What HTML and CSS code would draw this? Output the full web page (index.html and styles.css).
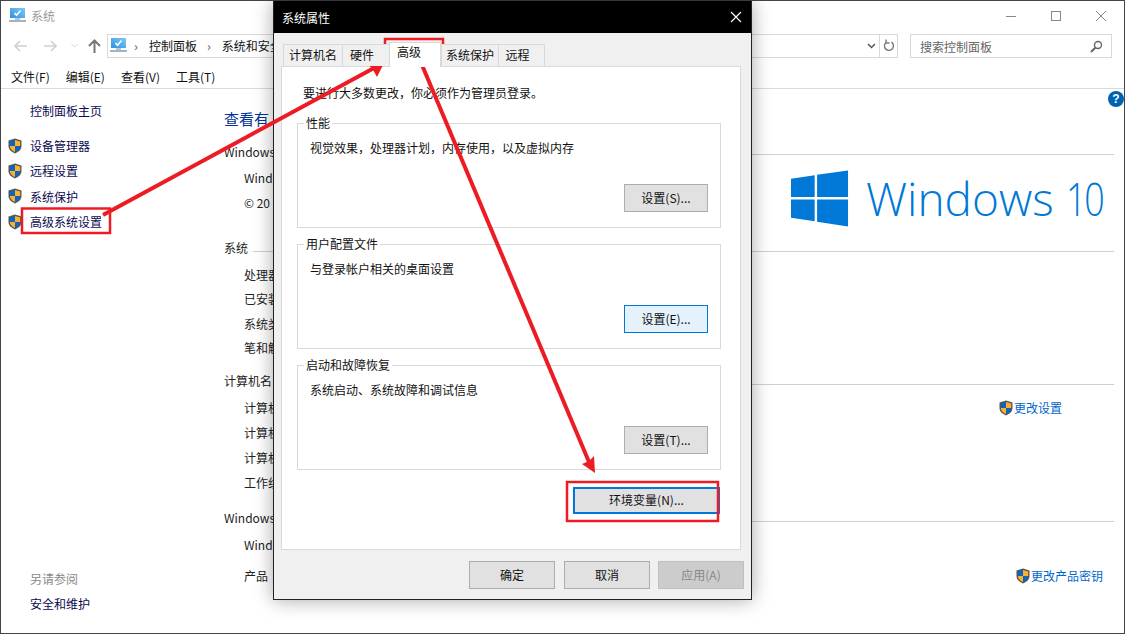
FILE: index.html
```html
<!DOCTYPE html>
<html>
  <head>
    <meta charset="UTF-8" />
    <title>系统</title>
    <link rel="stylesheet" href="styles.css">
  </head>
  <body>
    <svg class="defs" width="0" height="0">
      <defs>
        <linearGradient id="screen" x1="0" y1="1" x2="1" y2="0">
          <stop offset="0" stop-color="#2f8fe0"/>
          <stop offset="1" stop-color="#7fcaf7"/>
        </linearGradient>
      </defs>
      <symbol id="shield" viewBox="0 0 16 16">
        <path d="M8 .5 14.500 2.600V8c0 3.400-2.700 5.800-6.500 7.500C4.200 13.800 1.500 11.400 1.500 8V2.600Z" fill="#555"/>
        <path d="M8 2 2.800 3.600V8H8Z" fill="#0a66c2"/>
        <path d="M8 2 13.200 3.600V8H8Z" fill="#fbb12c"/>
        <path d="M2.800 8C3 10.800 5 12.700 8 14.100V8Z" fill="#fbb12c"/>
        <path d="M13.200 8C13 10.800 11 12.700 8 14.100V8Z" fill="#0a66c2"/>
      </symbol>
      <symbol id="monitor" viewBox="0 0 17 17">
        <rect x="1" y="1" width="15" height="10" fill="url(#screen)"/>
        <path d="M5.500 6 7.500 8.200 11.500 3.500" fill="none" stroke="#fff" stroke-width="1.600"/>
        <rect x="6" y="11" width="5" height="2" fill="#b5c6d4"/>
        <rect x="0" y="13" width="17" height="2" fill="#9fb4c6"/>
      </symbol>
    </svg>

    <div class="win">
      <div class="titlebar">
        <svg class="title-icon"><use href="#monitor"/></svg>
        <span class="title-text">系统</span>
        <div class="win-btns">
          <svg width="12" height="12" viewBox="0 0 12 12"><path d="M1 6.500H11" stroke="#888"/></svg>
          <svg width="12" height="12" viewBox="0 0 12 12"><rect x="1.500" y="1.500" width="9" height="9" fill="none" stroke="#888"/></svg>
          <svg width="12" height="12" viewBox="0 0 12 12"><path d="M1 1 11 11M11 1 1 11" stroke="#888"/></svg>
        </div>
      </div>

      <div class="navbar">
        <svg class="nav-arrow" width="13" height="12" viewBox="0 0 13 12"><path d="M6 1 1 6 6 11M1 6H13" fill="none" stroke="#d0d0d0" stroke-width="1.600"/></svg>
        <svg class="nav-arrow" width="13" height="12" viewBox="0 0 13 12"><path d="M7 1 12 6 7 11M12 6H0" fill="none" stroke="#d0d0d0" stroke-width="1.600"/></svg>
        <svg class="nav-drop" width="7" height="5" viewBox="0 0 7 5"><path d="M.5 1 3.500 4 6.500 1" fill="none" stroke="#d0d0d0"/></svg>
        <svg class="nav-up" width="13" height="14" viewBox="0 0 13 14"><path d="M1 7 6.500 1.500 12 7M6.500 2V14" fill="none" stroke="#777" stroke-width="2"/></svg>
        <div class="address">
          <svg class="addr-icon"><use href="#monitor"/></svg>
          <span class="crumb-sep">›</span>
          <span class="crumb">控制面板</span>
          <span class="crumb-sep">›</span>
          <span class="crumb">系统和安全</span>
          <svg class="addr-drop" width="9" height="6" viewBox="0 0 9 6"><path d="M1 1 4.500 4.500 8 1" fill="none" stroke="#555" stroke-width="1.500"/></svg>
          <div class="addr-refresh">
            <svg width="12" height="13" viewBox="0 0 12 13"><path d="M8.500 3.200A4.500 4.500 0 1 1 3 3.500M3 .5V4H6.500" fill="none" stroke="#777" stroke-width="1.400"/></svg>
          </div>
        </div>
        <div class="search">
          <span>搜索控制面板</span>
          <svg width="13" height="13" viewBox="0 0 13 13"><circle cx="8" cy="5" r="3.500" fill="none" stroke="#666" stroke-width="1.400"/><path d="M5.500 7.500 1 12" stroke="#666" stroke-width="2"/></svg>
        </div>
      </div>

      <div class="menubar">
        <span>文件(F)</span>
        <span>编辑(E)</span>
        <span>查看(V)</span>
        <span>工具(T)</span>
      </div>

      <div class="content">
        <div class="sidebar">
          <div class="side-home">控制面板主页</div>
          <div class="side-item"><svg class="shield"><use href="#shield"/></svg>设备管理器</div>
          <div class="side-item"><svg class="shield"><use href="#shield"/></svg>远程设置</div>
          <div class="side-item"><svg class="shield"><use href="#shield"/></svg>系统保护</div>
          <div class="side-item"><svg class="shield"><use href="#shield"/></svg>高级系统设置</div>
          <div class="side-foot">
            <div class="side-see">另请参阅</div>
            <div class="side-link">安全和维护</div>
          </div>
        </div>

        <div class="main">
          <div class="help">?</div>
          <h1>查看有</h1>

          <div class="sec-head sec-first"><span>Windows</span></div>
          <div class="row">Wind</div>
          <div class="row">© 20</div>
          <div class="logo">
            <svg width="58" height="57" viewBox="0 0 60 58"><path d="M0 8.500 24.500 5V27.500H0ZM27 4.500 59 0V27.500H27ZM0 30H24.500V52.500L0 49ZM27 30H59V58L27 53Z" fill="#0078d7"/></svg>
            <span>Windows <span class="logo-num">10</span></span>
          </div>

          <div class="sec-head sec-system"><span>系统</span></div>
          <div class="row row-tight">处理器</div>
          <div class="row row-tight">已安装</div>
          <div class="row row-tight">系统类</div>
          <div class="row row-tight">笔和触</div>

          <div class="sec-head sec-name"><span>计算机名</span></div>
          <div class="row">计算机<a class="change change-a"><svg class="shield"><use href="#shield"/></svg>更改设置</a></div>
          <div class="row">计算机</div>
          <div class="row">计算机</div>
          <div class="row">工作组</div>

          <div class="sec-head sec-activate"><span>Windows</span></div>
          <div class="row">Wind</div>
          <div class="row row-product">产品<a class="change change-b"><svg class="shield"><use href="#shield"/></svg>更改产品密钥</a></div>
        </div>
      </div>
    </div>

    <div class="dialog">
      <div class="dlg-title">
        <span>系统属性</span>
        <svg width="12" height="12" viewBox="0 0 12 12"><path d="M1 1 11 11M11 1 1 11" stroke="#fff" stroke-width="1.200"/></svg>
      </div>
      <div class="dlg-body">
        <div class="tabs">
          <div class="tab tab-name">计算机名</div>
          <div class="tab tab-hw">硬件</div>
          <div class="tab tab-on">高级</div>
          <div class="tab tab-prot">系统保护</div>
          <div class="tab tab-rem">远程</div>
        </div>
        <div class="panel">
          <p class="notice">要进行大多数更改，你必须作为管理员登录。</p>
          <fieldset class="group">
            <legend>性能</legend>
            <p>视觉效果，处理器计划，内存使用，以及虚拟内存</p>
            <button class="btn">设置(S)...</button>
          </fieldset>
          <fieldset class="group">
            <legend>用户配置文件</legend>
            <p>与登录帐户相关的桌面设置</p>
            <button class="btn btn-hover">设置(E)...</button>
          </fieldset>
          <fieldset class="group">
            <legend>启动和故障恢复</legend>
            <p>系统启动、系统故障和调试信息</p>
            <button class="btn">设置(T)...</button>
          </fieldset>
          <button class="btn btn-env">环境变量(N)...</button>
        </div>
        <div class="dlg-foot">
          <button class="btn btn-ok">确定</button>
          <button class="btn">取消</button>
          <button class="btn btn-off">应用(A)</button>
        </div>
      </div>
    </div>

    <!-- 红色标注 -->
    <svg class="arrows" width="1125" height="634" viewBox="0 0 1125 634">
      <g fill="none" stroke="#ed1c24" stroke-width="2.500">
        <rect x="22" y="208.500" width="88" height="24.500"/>
        <rect x="385" y="39" width="58" height="24.500"/>
        <rect x="567" y="482" width="151" height="39"/>
      </g>
      <path d="M103 215 374 68" stroke="#ed1c24" stroke-width="4"/>
      <path d="M385 61 365 63 372 68 377 77Z" fill="#ed1c24"/>
      <path d="M422 65 589 462" stroke="#ed1c24" stroke-width="4"/>
      <path d="M595 473 582 464 589 461 594 456Z" fill="#ed1c24"/>
    </svg>
  </body>
</html>
```

FILE: styles.css
```css
/* 基本 */
html, body {
  margin: 0;
  padding: 0;
  width: 1125px;
  height: 634px;
  overflow: hidden;
  background: #fff;
  font-family: "Noto Sans CJK SC", "Noto Sans", sans-serif;
  font-size: 12px;
  color: #111;
}

.defs {
  display: block;
  height: 0;
}

/* 后面的系统窗口 */
.win {
  width: 1125px;
  height: 634px;
  box-sizing: border-box;
  border: 1px solid #44444c;
  display: flex;
  flex-direction: column;
}

.titlebar {
  height: 29px;
  flex-shrink: 0;
  display: flex;
  align-items: center;
  padding-left: 8px;
}

.title-icon {
  width: 17px;
  height: 17px;
  margin-right: 5px;
}

.title-text {
  color: #999;
}

.win-btns {
  margin-left: auto;
  display: flex;
  gap: 33px;
  margin-right: 17px;
}

.navbar {
  height: 31px;
  flex-shrink: 0;
  display: flex;
  align-items: center;
  padding-left: 13px;
  box-sizing: border-box;
}

.nav-arrow {
  margin-right: 17px;
}

.nav-drop {
  margin: 0 10px 0 -3px;
}

.nav-up {
  margin-right: 6px;
}

.address {
  width: 791px;
  height: 24px;
  box-sizing: border-box;
  border: 1px solid #d9d9d9;
  display: flex;
  align-items: center;
  padding-left: 2px;
}

.addr-icon {
  width: 17px;
  height: 17px;
  margin-right: -3px;
}

.crumb-sep {
  color: #777;
  margin: 0 11px 0 10px;
  font-weight: bold;
}

.addr-drop {
  margin-left: auto;
  margin-right: 3px;
}

.addr-refresh {
  width: 17px;
  height: 22px;
  border-left: 1px solid #d9d9d9;
  display: flex;
  align-items: center;
  justify-content: center;
}

.search {
  width: 202px;
  height: 24px;
  box-sizing: border-box;
  border: 1px solid #d9d9d9;
  margin-left: 12px;
  display: flex;
  align-items: center;
  justify-content: space-between;
  padding: 1px 8px 0 9px;
  color: #666;
}

.menubar {
  height: 28px;
  flex-shrink: 0;
  box-sizing: border-box;
  border-bottom: 1px solid #dadada;
  display: flex;
  align-items: center;
  padding-left: 10px;
  padding-top: 4px;
  gap: 16px;
}

.content {
  flex: 1;
  display: flex;
  min-height: 0;
}

/* 左侧 */
.sidebar {
  width: 223px;
  flex-shrink: 0;
  display: flex;
  flex-direction: column;
  color: #0a0a50;
}

.side-home {
  margin: 13px 0 13px 29px;
  line-height: 18px;
}

.side-item {
  height: 25.300px;
  display: flex;
  align-items: center;
  padding-left: 6px;
}

.shield {
  width: 16px;
  height: 16px;
  flex-shrink: 0;
}

.side-item .shield {
  margin-right: 7px;
}

.side-foot {
  margin-top: auto;
  padding: 0 0 20px 29px;
}

.side-see {
  color: #888;
  margin-bottom: 7px;
  line-height: 18px;
}

.side-link {
  line-height: 18px;
}

/* 右侧内容 */
.main {
  flex: 1;
  padding-right: 10px;
  position: relative;
  color: #222;
}

.main h1 {
  margin: 19px 0 0 0;
  font-size: 15px;
  font-weight: normal;
  line-height: 22px;
  color: #003399;
}

.help {
  position: absolute;
  right: 0;
  top: 2px;
  width: 16px;
  height: 16px;
  border-radius: 50%;
  background: #0063b1;
  color: #fff;
  font: bold 12px/16px "Liberation Sans", sans-serif;
  text-align: center;
}

.sec-head {
  height: 25px;
  display: flex;
  align-items: center;
  gap: 5px;
}

.sec-head::after {
  content: "";
  flex: 1;
  height: 1px;
  background: #cfcfcf;
  margin-top: 7px;
}

.sec-first {
  margin-top: 9px;
  margin-bottom: 1px;
}

.sec-first::after {
  margin-top: 5px;
}

.sec-system {
  margin-top: 20px;
  margin-bottom: 2px;
}

.sec-name {
  margin-top: 8px;
  margin-bottom: 2px;
}

.sec-activate {
  margin-top: 10px;
  margin-bottom: 2px;
}

.row {
  height: 25px;
  display: flex;
  align-items: center;
  padding-left: 20px;
}

.row-tight {
  height: 24.500px;
}

.row-product {
  margin-top: 6px;
}

.change {
  color: #0066cc;
  display: flex;
  align-items: center;
  margin-left: auto;
}

.change-a {
  margin-right: 52px;
}

.change-b {
  margin-right: 11px;
}

.logo {
  position: absolute;
  left: 567px;
  top: 81px;
  display: flex;
  align-items: center;
  gap: 17px;
  color: #0078d7;
  font-family: "Open Sans", sans-serif;
  font-weight: 300;
  font-size: 46px;
  line-height: 57px;
  white-space: nowrap;
}

.logo-num {
  display: inline-block;
  letter-spacing: -3px;
  transform: scaleX(0.78);
  transform-origin: left;
}

/* 系统属性对话框 */
.dialog {
  position: absolute;
  left: 273px;
  top: 1px;
  width: 479px;
  height: 599px;
  box-sizing: border-box;
  border: 1px solid #222;
  border-top: none;
  background: #f0f0f0;
  box-shadow: 0 0 18px rgba(0, 0, 0, 0.35);
  display: flex;
  flex-direction: column;
}

.dlg-title {
  height: 32px;
  flex-shrink: 0;
  background: #000;
  color: #fff;
  display: flex;
  align-items: center;
  justify-content: space-between;
  padding: 0 9px 0 8px;
}

.dlg-body {
  flex: 1;
  padding: 11px 10px 0 7px;
  display: flex;
  flex-direction: column;
}

.tabs {
  display: flex;
  height: 22px;
  padding-left: 2px;
  align-items: flex-end;
  position: relative;
  z-index: 1;
}

.tab {
  height: 22px;
  box-sizing: border-box;
  border: 1px solid #d9d9d9;
  border-bottom: none;
  border-right: none;
  background: #f0f0f0;
  line-height: 20px;
  text-align: center;
}

.tab-name { width: 59px; }
.tab-hw { width: 47px; padding-right: 8px; }
.tab-prot { width: 57px; }
.tab-rem { width: 47px; padding-right: 8px; border-right: 1px solid #d9d9d9; }

.tab-on {
  width: 52px;
  height: 25px;
  background: #fff;
  margin-bottom: -1px;
  line-height: 18px;
  padding-right: 12px;
  border-right: 1px solid #d9d9d9;
}

.panel {
  width: 460px;
  height: 484px;
  box-sizing: border-box;
  border: 1px solid #d9d9d9;
  background: #fff;
  padding: 16px 20px 0 15px;
  display: flex;
  flex-direction: column;
  align-items: flex-start;
}

.notice {
  margin: 0 0 0 6px;
  line-height: 20px;
}

.group {
  width: 424px;
  height: 113px;
  box-sizing: border-box;
  margin: 0 0 8px 0;
  padding: 0 12px 14px 12px;
  border: 1px solid #d9d9d9;
  display: flex;
  flex-direction: column;
  align-items: flex-end;
}

.notice + .group {
  margin-top: 12px;
}

.group legend {
  padding: 0 2px;
  margin-left: -6px;
  line-height: 16px;
}

.group p {
  margin: 7px 0 0 0;
  line-height: 20px;
  align-self: flex-start;
}

.btn {
  width: 86px;
  height: 28px;
  box-sizing: border-box;
  border: 1px solid #adadad;
  background: #e1e1e1;
  color: #111;
  font-family: inherit;
  font-size: 12px;
  padding: 0 0 2px 0;
}

.group .btn {
  margin-top: 26px;
  width: 84px;
}

.group .btn-hover {
  background: #e5f1fb;
  border-color: #0078d7;
}

.btn-env {
  align-self: flex-end;
  width: 147px;
  height: 27px;
  border: 2px solid #0078d7;
  margin: 9px 0 0 0;
}

.btn-off {
  color: #888;
  background: #ccc;
  border-color: #bfbfbf;
}

.btn-ok {
  margin-right: 1px;
}

.dlg-foot {
  display: flex;
  gap: 8px;
  justify-content: flex-end;
  margin: 11px -3px 0 0;
}

/* 标注 */
.arrows {
  position: absolute;
  left: 0;
  top: 0;
  pointer-events: none;
}
```
